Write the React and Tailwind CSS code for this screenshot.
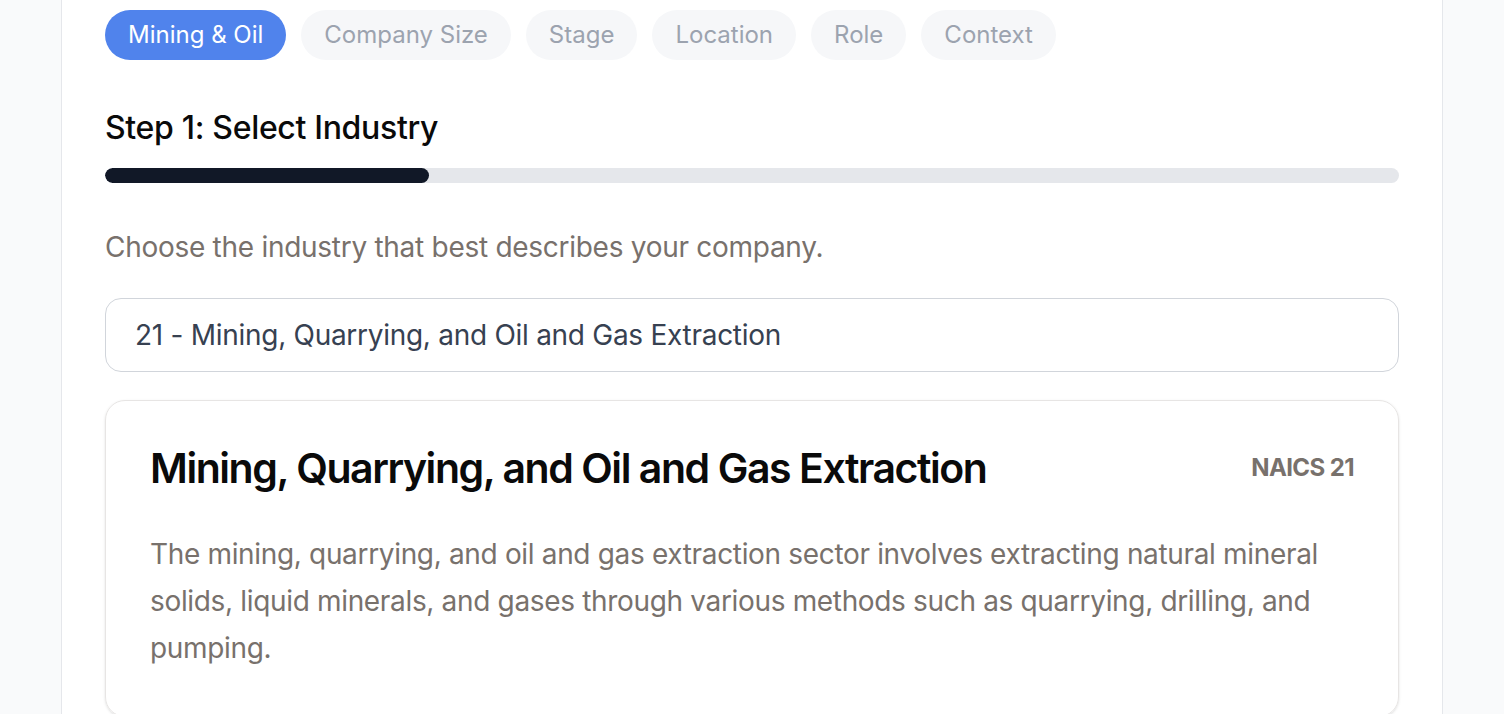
import React from "react";

const tabs = ["Mining & Oil", "Company Size", "Stage", "Location", "Role", "Context"];

export default function App() {
  return (
    <div
      className="min-h-[714px] w-full bg-[#f9fafb] flex justify-center"
      style={{ fontFamily: 'Inter, "Noto Sans", sans-serif' }}
    >
      <div className="w-[1382px] bg-white border-x border-[#e5e7eb] px-[43px] pt-[10px] pb-10">
        <div className="flex gap-[15px]">
          {tabs.map((t, i) => (
            <div
              key={t}
              className={
                i === 0
                  ? "h-[50px] px-[23px] flex items-center rounded-full bg-[#5083ec] text-white text-[24px]"
                  : "h-[50px] px-[23px] flex items-center rounded-full bg-[#f6f7f9] text-[#9ca3af] text-[24px]"
              }
            >
              {t}
            </div>
          ))}
        </div>

        <h2 className="mt-[48px] text-[32px] leading-[40px] font-medium tracking-[-0.01em] text-[#0a0a0a]">
          Step 1: Select Industry
        </h2>

        <div className="mt-[20px] h-[15px] w-full rounded-full bg-[#e5e7eb] overflow-hidden">
          <div className="h-full w-1/4 rounded-full bg-[#111827]" />
        </div>

        <p className="mt-[44px] text-[28px] leading-[40px] tracking-[-0.01em] text-[#78716c]">
          Choose the industry that best describes your company.
        </p>

        <div className="mt-[31px] h-[74px] rounded-[16px] border border-[#d1d5db] flex items-center px-[29px] text-[28px] tracking-[-0.01em] text-[#374151]">
          21 - Mining, Quarrying, and Oil and Gas Extraction
        </div>

        <div className="mt-[28px] rounded-[20px] border border-[#e7e5e4] shadow-sm px-[44px] pt-[43px] pb-[44px]">
          <div className="flex items-center justify-between">
            <h3 className="text-[41px] leading-[48px] font-semibold tracking-[-0.035em] text-[#0a0a0a]">
              Mining, Quarrying, and Oil and Gas Extraction
            </h3>
            <span className="text-[24px] font-bold text-[#78716c] tracking-tight">NAICS 21</span>
          </div>
          <p className="mt-[39px] text-[28px] leading-[47px] tracking-[-0.012em] text-[#78716c]">
            The mining, quarrying, and oil and gas extraction sector involves extracting natural mineral
            solids, liquid minerals, and gases through various methods such as quarrying, drilling, and
            pumping.
          </p>
        </div>
      </div>
    </div>
  );
}
